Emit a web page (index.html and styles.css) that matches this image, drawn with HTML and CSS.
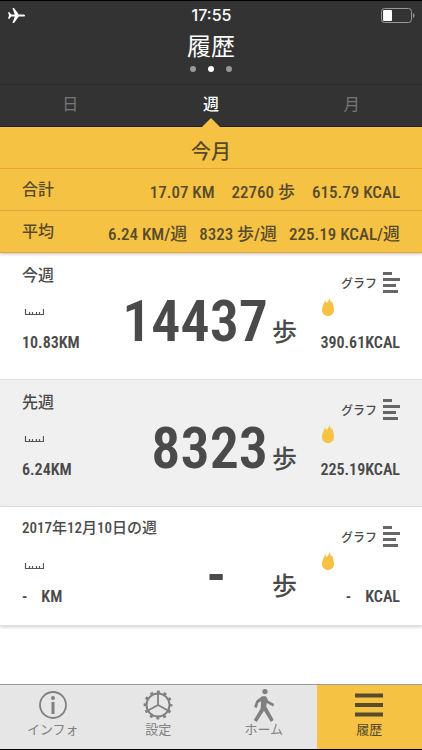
FILE: index.html
```html
<!DOCTYPE html>
<html lang="ja">
<head>
    <meta charset="UTF-8">
    <title>履歴</title>
    <meta name="viewport" content="width=device-width, initial-scale=1.0">
    <link rel="stylesheet" href="styles.css">
</head>
<body>

<svg class="defs" aria-hidden="true">
    <symbol id="ruler" viewBox="0 0 20 7">
        <path d="M1.500 0V5.500H19.500V0M5.500 5V3M8.500 5V3M12.500 5V3M15.500 5V3" fill="none" stroke="#555" stroke-width="1.200"/>
    </symbol>
    <symbol id="flame" viewBox="0 0 12 18">
        <path d="M3.200 2C3.400 3.500 3.800 4.200 4.500 5C6 3.800 7 2.300 7.500 0C8.300 1.800 8.800 3.200 9 4.600C9.400 4.200 9.700 3.800 10 3.200C11.200 6 12 8.700 12 12C12 15.500 9.400 18 6 18S0 15.500 0 12C0 8 2.300 5.500 3.200 2Z" fill="#f5c244"/>
    </symbol>
    <symbol id="bars" viewBox="0 0 17 21">
        <path d="M0 0H9V3H0ZM0 6H17V9H0ZM0 12H13V15H0ZM0 18H15V21H0Z" fill="#666"/>
    </symbol>
</svg>

<header class="header">
    <div class="status">
        <svg class="plane" viewBox="0 0 17 15"><path d="M17 7.500C17 6.600 16 6.400 15 6.400H10.800L6 0H4.400L6.800 6.400H3.200L1.500 4.200H0L1 7.500L0 10.800H1.500L3.200 8.600H6.800L4.400 15H6L10.800 8.600H15C16 8.600 17 8.400 17 7.500Z" fill="#fff"/></svg>
        <span class="time">17:55</span>
        <svg class="battery" viewBox="0 0 34 15"><rect x="0.500" y="0.500" width="30" height="14" rx="3" fill="none" stroke="#999"/><rect x="2" y="2" width="9" height="11" rx="1" fill="#fff"/><path d="M32 5C34 6 34 9 32 10Z" fill="#999"/></svg>
    </div>
    <h1 class="title">履歴</h1>
    <div class="dots"><i></i><i class="on"></i><i></i></div>
</header>

<div class="tabs">
    <button class="tab">日</button>
    <button class="tab active">週</button>
    <button class="tab">月</button>
</div>

<section class="summary">
    <h2 class="summary-title">今月</h2>
    <div class="summary-row">
        <span class="name">合計</span>
        <span>17.07 KM</span>
        <span>22760 歩</span>
        <span>615.79 KCAL</span>
    </div>
    <div class="summary-row average">
        <span class="name">平均</span>
        <span>6.24 KM/週</span>
        <span>8323 歩/週</span>
        <span>225.19 KCAL/週</span>
    </div>
</section>

<main class="weeks">
    <article class="week">
        <h3 class="week-name">今週</h3>
        <button class="graph">グラフ<svg><use href="#bars"/></svg></button>
        <svg class="ruler"><use href="#ruler"/></svg>
        <div class="steps"><span class="count">14437</span><span class="unit">歩</span></div>
        <svg class="flame"><use href="#flame"/></svg>
        <span class="distance">10.83KM</span>
        <span class="kcal">390.61KCAL</span>
    </article>
    <article class="week">
        <h3 class="week-name">先週</h3>
        <button class="graph">グラフ<svg><use href="#bars"/></svg></button>
        <svg class="ruler"><use href="#ruler"/></svg>
        <div class="steps"><span class="count">8323</span><span class="unit">歩</span></div>
        <svg class="flame"><use href="#flame"/></svg>
        <span class="distance">6.24KM</span>
        <span class="kcal">225.19KCAL</span>
    </article>
    <article class="week empty">
        <h3 class="week-name">2017年12月10日の週</h3>
        <button class="graph">グラフ<svg><use href="#bars"/></svg></button>
        <svg class="ruler"><use href="#ruler"/></svg>
        <div class="steps"><span class="count">-</span><span class="unit">歩</span></div>
        <svg class="flame"><use href="#flame"/></svg>
        <span class="distance"><span>-</span><span>KM</span></span>
        <span class="kcal"><span>-</span><span>KCAL</span></span>
    </article>
</main>

<nav class="nav">
    <a href="#info">
        <svg viewBox="0 0 30 30"><circle cx="15" cy="15" r="13" fill="none" stroke="currentColor" stroke-width="1.800"/><circle cx="15" cy="8" r="2" fill="currentColor"/><path d="M13.500 12H16.500V24H13.500Z" fill="currentColor"/></svg>
        インフォ
    </a>
    <a href="#settings">
        <svg viewBox="0 0 30 30"><circle cx="15" cy="15" r="13.200" fill="none" stroke="currentColor" stroke-width="2.400" stroke-dasharray="3 3.911" stroke-dashoffset="1.500"/><circle cx="15" cy="15" r="11.500" fill="none" stroke="currentColor" stroke-width="2"/><path d="M15 4V15L5 20.500M15 15L25 20.500" fill="none" stroke="currentColor" stroke-width="1.800"/></svg>
        設定
    </a>
    <a href="#home">
        <svg class="walker" viewBox="0 0 22 34"><circle cx="12" cy="2.700" r="2.700" fill="currentColor"/><path d="M9 7.500H13L15.500 12L21.500 15.500L20.300 18L13.800 14.500L13.300 18L21 32L18 34L11 22.500L3.500 34L0.500 32L7.500 20L8 12.500L5.200 14.200L3.500 19.500L0.800 18.500L3 12Z" fill="currentColor"/></svg>
        ホーム
    </a>
    <a href="#history" class="current">
        <svg viewBox="0 0 30 30"><path d="M1 3.500H29V7.500H1ZM1 13H29V17H1ZM1 22.500H29V26.500H1Z" fill="currentColor"/></svg>
        履歴
    </a>
</nav>

</body>
</html>
```

FILE: styles.css
```css
* {
    box-sizing: border-box;
}
body {
    margin: 0;
    min-height: 100vh;
    display: flex;
    flex-direction: column;
    background: #fff;
    color: #4a4a4a;
    font-family: "Liberation Sans Narrow", "Roboto Condensed", Roboto, "Noto Sans CJK JP", sans-serif;
    font-size: 17px;
    border-bottom: 1px solid #000;
}
h1, h2, h3 {
    margin: 0;
    font-weight: 500;
}
button {
    border: 0;
    padding: 0;
    background: none;
    color: inherit;
    font-family: inherit;
}
svg {
    display: block;
}
.defs {
    position: absolute;
    width: 0;
    height: 0;
}
.header {
    height: 85px;
    background: #333;
    color: #fff;
    border-top: 1px solid #000;
    border-bottom: 1px solid #2b2b2b;
}
.status {
    display: grid;
    grid-template-columns: 1fr auto 1fr;
    align-items: center;
    height: 28px;
    padding: 0 7px 0 8px;
}
.plane {
    width: 17px;
    height: 15px;
}
.time {
    font-family: Inter, sans-serif;
    font-size: 16px;
    font-weight: 500;
}
.battery {
    width: 34px;
    height: 15px;
    justify-self: end;
}
.title {
    font-size: 24px;
    font-weight: 400;
    line-height: 36px;
    text-align: center;
}
.dots {
    display: flex;
    justify-content: center;
    gap: 12px;
    padding-top: 1px;
}
.dots i {
    width: 6px;
    height: 6px;
    border-radius: 50%;
    background: #999;
}
.dots .on {
    background: #fff;
}
.tabs {
    display: flex;
    height: 42px;
    background: #333;
    border-bottom: 1px solid #222;
}
.tab {
    flex: 1;
    position: relative;
    padding-bottom: 6px;
    color: #777;
    font-size: 16px;
}
.tab.active {
    color: #fff;
    font-weight: 500;
}
.tab.active::after {
    content: "";
    position: absolute;
    left: 50%;
    bottom: -1px;
    transform: translateX(-50%);
    border: 9px solid transparent;
    border-top: 0;
    border-bottom-color: #f5c244;
}
.summary {
    background: #f5c244;
    color: #574b2c;
    box-shadow: 0 1px 3px rgba(0, 0, 0, 0.25);
}
.summary-title {
    height: 42px;
    padding-top: 10px;
    font-size: 20px;
    line-height: 30px;
    text-align: center;
    border-bottom: 1px solid #eba339;
}
.summary-row {
    display: flex;
    justify-content: flex-end;
    gap: 17px;
    height: 42px;
    padding: 0 22px;
    font-weight: 500;
    font-size: 17px;
    line-height: 46px;
    border-bottom: 1px solid #eba339;
}
.summary-row.average {
    gap: 12px;
}
.name {
    margin-right: auto;
    font-size: 16px;
    line-height: 42px;
}
.week {
    display: grid;
    grid-template-columns: 1fr auto 78px;
    grid-template-rows: 37px 28px 40px;
    grid-template-areas: "name name graph" "ruler steps flame" "distance steps kcal";
    column-gap: 25px;
    align-items: center;
    height: 127px;
    padding: 3px 22px 0;
    border-bottom: 1px solid #e2e2e2;
}
.week:nth-child(2) {
    background: #f0f0f0;
}
.week.empty {
    height: 119px;
    box-shadow: 0 1px 3px rgba(0, 0, 0, 0.2);
}
.week-name {
    grid-area: name;
    padding-bottom: 2px;
    font-size: 16px;
}
.empty .week-name {
    padding-bottom: 4px;
    font-size: 15px;
}
.graph {
    grid-area: graph;
    display: flex;
    align-items: center;
    justify-content: flex-end;
    gap: 6px;
    padding-top: 16px;
    font-size: 12px;
    font-weight: 500;
}
.graph svg {
    width: 17px;
    height: 21px;
}
.ruler {
    grid-area: ruler;
    width: 20px;
    height: 7px;
    margin: 10px 0 0 2px;
}
.flame {
    grid-area: flame;
    width: 12px;
    height: 18px;
}
.steps {
    grid-area: steps;
    display: flex;
    align-items: baseline;
    gap: 4px;
    line-height: 64px;
}
.count {
    font-size: 58px;
    font-weight: 600;
}
.unit {
    font-size: 25px;
    font-weight: 500;
}
.distance, .kcal {
    font-size: 16px;
    font-weight: 600;
}
.distance {
    grid-area: distance;
    padding-top: 2px;
}
.kcal {
    grid-area: kcal;
    justify-self: end;
    padding-top: 2px;
}
.empty .steps {
    gap: 46px;
}
.empty .distance, .empty .kcal {
    display: flex;
    gap: 14px;
}
.nav {
    display: flex;
    height: 65px;
    margin-top: auto;
    border-top: 1px solid #999;
    background: #e6e6e6;
}
.nav a {
    flex: 1;
    display: flex;
    flex-direction: column;
    align-items: center;
    padding-top: 4px;
    color: #808080;
    font-size: 13px;
    line-height: 18px;
    text-decoration: none;
}
.nav svg {
    width: 30px;
    height: 32px;
}
.nav .walker {
    height: 33px;
    margin-bottom: -1px;
}
.nav .current {
    background: #f5c244;
    color: #574b2c;
}
```
